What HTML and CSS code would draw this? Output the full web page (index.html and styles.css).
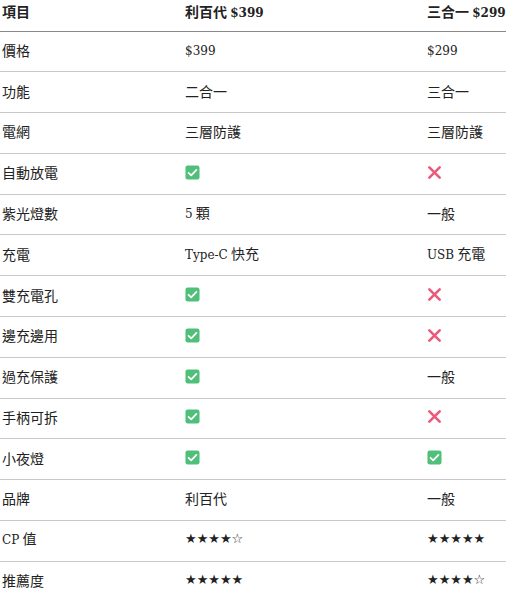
FILE: index.html
```html
<!DOCTYPE html>
<html lang="zh-Hant">
<head>
<meta charset="utf-8">
<link rel="stylesheet" href="styles.css">
</head>
<body>
<svg width="0" height="0" class="defs">
  <defs>
    <symbol id="yes" viewBox="0 0 16 16">
      <rect x="0.5" y="0.5" width="15" height="15" rx="2.5" fill="#4fbf7a"/>
      <path d="M3.8 8.3 L6.6 11 L12.2 5.2" fill="none" stroke="#fff" stroke-width="1.9" stroke-linecap="round" stroke-linejoin="round"/>
    </symbol>
    <symbol id="no" viewBox="0 0 16 16">
      <path d="M2.5 2.5 L13.5 13.5 M13.5 2.5 L2.5 13.5" fill="none" stroke="#ea5a7b" stroke-width="2.8" stroke-linecap="round"/>
    </symbol>
  </defs>
</svg>
<table class="cmp">
  <thead>
    <tr><th class="c1">項目</th><th class="c2">利百代 <span class="lat">$399</span></th><th class="c3">三合一 <span class="lat">$299</span></th></tr>
  </thead>
  <tbody>
    <tr><td>價格</td><td><span class="lat">$399</span></td><td><span class="lat">$299</span></td></tr>
    <tr><td>功能</td><td>二合一</td><td>三合一</td></tr>
    <tr><td>電網</td><td>三層防護</td><td>三層防護</td></tr>
    <tr><td>自動放電</td><td><svg class="ic"><use href="#yes"/></svg></td><td><svg class="ic"><use href="#no"/></svg></td></tr>
    <tr><td>紫光燈數</td><td><span class="lat">5</span> 顆</td><td>一般</td></tr>
    <tr><td>充電</td><td><span class="lat">Type-C</span> 快充</td><td><span class="lat">USB</span> 充電</td></tr>
    <tr><td>雙充電孔</td><td><svg class="ic"><use href="#yes"/></svg></td><td><svg class="ic"><use href="#no"/></svg></td></tr>
    <tr><td>邊充邊用</td><td><svg class="ic"><use href="#yes"/></svg></td><td><svg class="ic"><use href="#no"/></svg></td></tr>
    <tr><td>過充保護</td><td><svg class="ic"><use href="#yes"/></svg></td><td>一般</td></tr>
    <tr><td>手柄可拆</td><td><svg class="ic"><use href="#yes"/></svg></td><td><svg class="ic"><use href="#no"/></svg></td></tr>
    <tr><td>小夜燈</td><td><svg class="ic"><use href="#yes"/></svg></td><td><svg class="ic"><use href="#yes"/></svg></td></tr>
    <tr><td>品牌</td><td>利百代</td><td>一般</td></tr>
    <tr><td><span class="lat">CP</span> 值</td><td class="stars">★★★★☆</td><td class="stars">★★★★★</td></tr>
    <tr><td>推薦度</td><td class="stars">★★★★★</td><td class="stars">★★★★☆</td></tr>
  </tbody>
</table>
</body>
</html>
```
FILE: styles.css
```css
html, body {
  margin: 0;
  padding: 0;
  background: #fff;
}
body {
  font-family: "Noto Sans CJK TC", sans-serif;
  font-size: 14px;
  line-height: 18px;
  color: #222;
  overflow: hidden;
}
.defs {
  position: absolute;
  width: 0;
  height: 0;
}
.lat {
  font-family: "DejaVu Serif", serif;
  font-size: 12px;
}
.cmp {
  border-collapse: collapse;
  width: 520px;
  table-layout: fixed;
}
.cmp th, .cmp td {
  text-align: left;
  padding: 0 2px;
  white-space: nowrap;
  vertical-align: middle;
  box-sizing: border-box;
}
.cmp th {
  height: 31px;
  font-weight: bold;
  border-bottom: 1px solid #8a8a8a;
  vertical-align: top;
  padding-top: 2px;
  padding-bottom: 0;
}
.cmp td {
  height: 40.79px;
  padding-bottom: 3px;
  border-bottom: 1px solid #c8c8c8;
}
.c1 { width: 183px; }
.c2 { width: 242px; }
.ic {
  width: 15px;
  height: 15px;
  display: block;
}
.stars {
  font-family: "DejaVu Sans", sans-serif;
  font-size: 13px;
}
```
